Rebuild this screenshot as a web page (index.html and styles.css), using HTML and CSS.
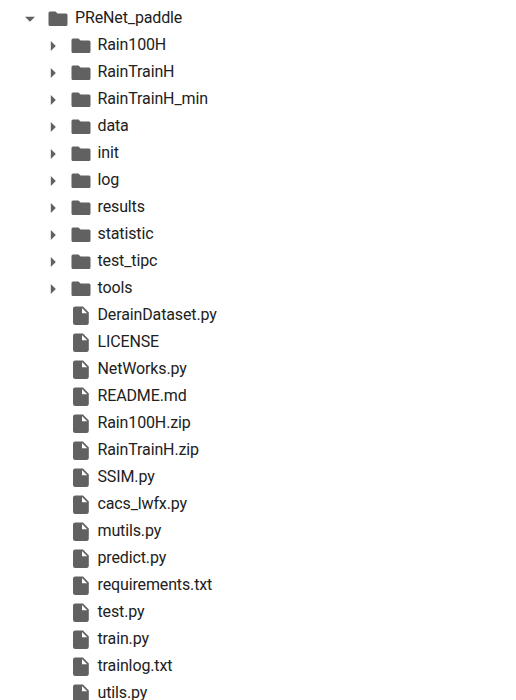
FILE: index.html
```html
<!DOCTYPE html>
<html lang="en">
<head>
<meta charset="utf-8">
<title>PReNet_paddle</title>
<link rel="stylesheet" href="styles.css">
</head>
<body>
<ul class="tree" id="tree"></ul>
<script src="tree.js"></script>
</body>
</html>
```
FILE: styles.css
```css
body {
  margin: 0;
  height: 700px;
  overflow: hidden;
  background: #fff;
  color: #212121;
  font: 16px/27px Roboto, sans-serif;
  letter-spacing: -0.13px;
}
.tree {
  list-style: none;
  margin: 0;
  padding: 4px 0 0 18px;
}
.row {
  display: flex;
  align-items: center;
  height: 27px;
  white-space: nowrap;
}
.child {
  padding-left: 22.5px;
}
.arrow, .icon {
  flex: none;
  width: 24px;
  height: 24px;
  fill: #616161;
}
.icon {
  margin: 3px 5px 0 4px;
}
.arrow {
  margin-top: 3px;
}
.hidden {
  visibility: hidden;
}
```
FILE: tree.js
```js
const paths = {
  open: 'M7 9.8h10L12 14.8z',
  closed: 'M9.8 7v10l5-5z',
  folder: 'M4 4.5h5.5l2 2H20a1.5 1.5 0 0 1 1.5 1.5v9.5a1.5 1.5 0 0 1-1.5 1.5H4a1.5 1.5 0 0 1-1.5-1.5V6A1.5 1.5 0 0 1 4 4.5z',
  file: 'M6.2 2.6H14l5.8 5.8v10.4a2.2 2.2 0 0 1-2.2 2.2H6.2A2.2 2.2 0 0 1 4 18.8V4.8a2.2 2.2 0 0 1 2.2-2.2zM13 4v5.2h5.2z'
};
const folders = ['Rain100H', 'RainTrainH', 'RainTrainH_min', 'data', 'init', 'log', 'results', 'statistic', 'test_tipc', 'tools'];
const files = ['DerainDataset.py', 'LICENSE', 'NetWorks.py', 'README.md', 'Rain100H.zip', 'RainTrainH.zip', 'SSIM.py', 'cacs_lwfx.py', 'mutils.py', 'predict.py', 'requirements.txt', 'test.py', 'train.py', 'trainlog.txt', 'utils.py'];
const svg = (cls, name) => `<svg class="${cls}" viewBox="0 0 24 24"><path fill-rule="evenodd" d="${paths[name]}"/></svg>`;
const row = (cls, arrow, icon, name) => `<li class="row ${cls}">${arrow}${svg('icon', icon)}<span>${name}</span></li>`;
document.getElementById('tree').innerHTML =
  row('root', svg('arrow', 'open'), 'folder', 'PReNet_paddle') +
  folders.map(n => row('child', svg('arrow', 'closed'), 'folder', n)).join('') +
  files.map(n => row('child', svg('arrow hidden', 'closed'), 'file', n)).join('');
```
